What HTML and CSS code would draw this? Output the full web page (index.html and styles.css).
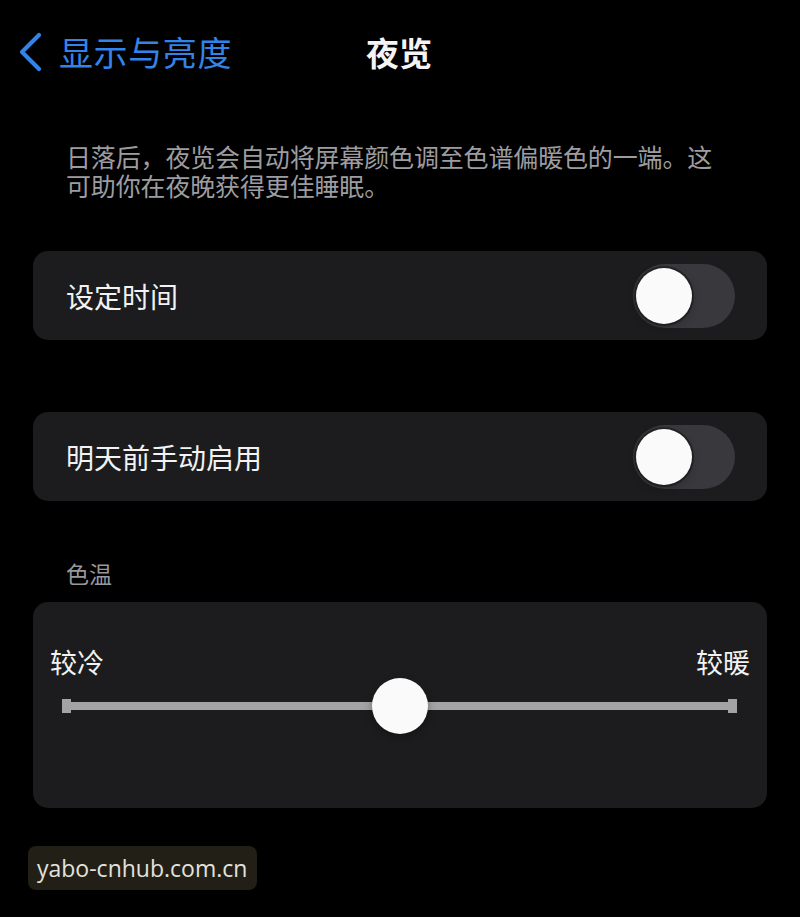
FILE: index.html
```html
<!DOCTYPE html>
<html lang="zh-CN">
<head>
<meta charset="utf-8">
<title>夜览</title>
<link rel="stylesheet" href="styles.css">
</head>
<body>
<div class="screen">
  <header class="nav">
    <a class="back" href="#">
      <svg class="chevron" width="26" height="40" viewBox="0 0 26 40" aria-hidden="true">
        <path d="M22 3 L5 20 L22 37" fill="none" stroke="currentColor" stroke-width="4.2" stroke-linecap="round" stroke-linejoin="round"/>
      </svg>
      <span class="back-label">显示与亮度</span>
    </a>
    <h1 class="title">夜览</h1>
    <span class="nav-spacer"></span>
  </header>

  <p class="intro">日落后，夜览会自动将屏幕颜色调至色谱偏暖色的一端。这可助你在夜晚获得更佳睡眠。</p>

  <section class="card row">
    <span class="row-label">设定时间</span>
    <span class="switch"><span class="switch-knob"></span></span>
  </section>

  <section class="card row card-gap">
    <span class="row-label">明天前手动启用</span>
    <span class="switch"><span class="switch-knob"></span></span>
  </section>

  <div class="group-title">色温</div>

  <section class="card temp">
    <div class="temp-labels">
      <span>较冷</span>
      <span>较暖</span>
    </div>
    <div class="slider">
      <span class="cap"></span>
      <span class="track"></span>
      <span class="cap"></span>
      <span class="thumb" style="left: 50%"></span>
    </div>
  </section>

  <div class="badge">yabo-cnhub.com.cn</div>
</div>
</body>
</html>
```

FILE: styles.css
```css
html, body {
  margin: 0;
  padding: 0;
  background: #000;
}

body {
  font-family: "Noto Sans CJK SC", "Noto Sans", sans-serif;
  color: #fff;
}

.screen {
  position: relative;
  width: 800px;
  height: 917px;
  overflow: hidden;
  background: #000;
}

/* navigation bar */
.nav {
  display: grid;
  grid-template-columns: 1fr auto 1fr;
  align-items: center;
  height: 104px;
}

.back {
  display: flex;
  align-items: center;
  gap: 16px;
  padding-left: 17px;
  color: #3284e8;
  text-decoration: none;
}

.chevron {
  display: block;
}

.back-label {
  font-size: 34px;
  line-height: 1;
  letter-spacing: 0.6px;
}

.title {
  margin: 0;
  font-size: 33px;
  line-height: 1;
  font-weight: 700;
  color: #f4f4f4;
  transform: translateX(-1px);
}

/* footer text under the nav */
.intro {
  margin: 38px 66px 0;
  font-size: 25px;
  line-height: 29px;
  color: #9d9da1;
  letter-spacing: -0.15px;
}

/* grouped cards */
.card {
  margin: 51px 33px 0;
  background: #1c1c1e;
  border-radius: 15px;
}

.card-gap {
  margin-top: 72px;
}

.row {
  display: flex;
  align-items: center;
  justify-content: space-between;
  height: 89px;
  padding: 0 32px 0 33px;
}

.row-label {
  font-size: 28px;
  line-height: 1;
  color: #f2f2f2;
}

.switch {
  position: relative;
  width: 102px;
  height: 64px;
  border-radius: 32px;
  background: #39393d;
}

.switch-knob {
  position: absolute;
  top: 4px;
  left: 3px;
  width: 56px;
  height: 56px;
  border-radius: 50%;
  background: #fbfafa;
  box-shadow: 0 0 0 2px rgba(0, 0, 0, 0.35), 0 3px 8px rgba(0, 0, 0, 0.25);
}

.group-title {
  margin: 57px 66px 0;
  font-size: 23px;
  line-height: 30px;
  color: #98989c;
}

/* colour temperature slider */
.temp {
  margin-top: 14px;
  height: 206px;
  padding: 44px 17px 0;
  box-sizing: border-box;
}

.temp-labels {
  display: flex;
  justify-content: space-between;
  font-size: 27px;
  line-height: 32px;
  color: #f2f2f2;
}

.slider {
  position: relative;
  display: flex;
  align-items: center;
  height: 56px;
  margin: 0 13px 0 12px;
}

.track {
  flex: 1;
  height: 8px;
  background: #a3a3a6;
}

.cap {
  width: 9px;
  height: 14px;
  background: #a3a3a6;
}

.thumb {
  position: absolute;
  top: 0;
  width: 56px;
  height: 56px;
  margin-left: -28px;
  border-radius: 50%;
  background: #fbfafa;
  box-shadow: 0 3px 8px rgba(0, 0, 0, 0.3);
}

/* site badge laid over the bottom-left corner */
.badge {
  position: absolute;
  left: 28px;
  top: 846px;
  height: 44px;
  padding: 0 10px 0 9px;
  display: flex;
  align-items: center;
  border-radius: 8px;
  background: #221f17;
  font-family: "Open Sans", "Noto Sans", sans-serif;
  font-size: 23px;
  color: #e2e2de;
}
```
